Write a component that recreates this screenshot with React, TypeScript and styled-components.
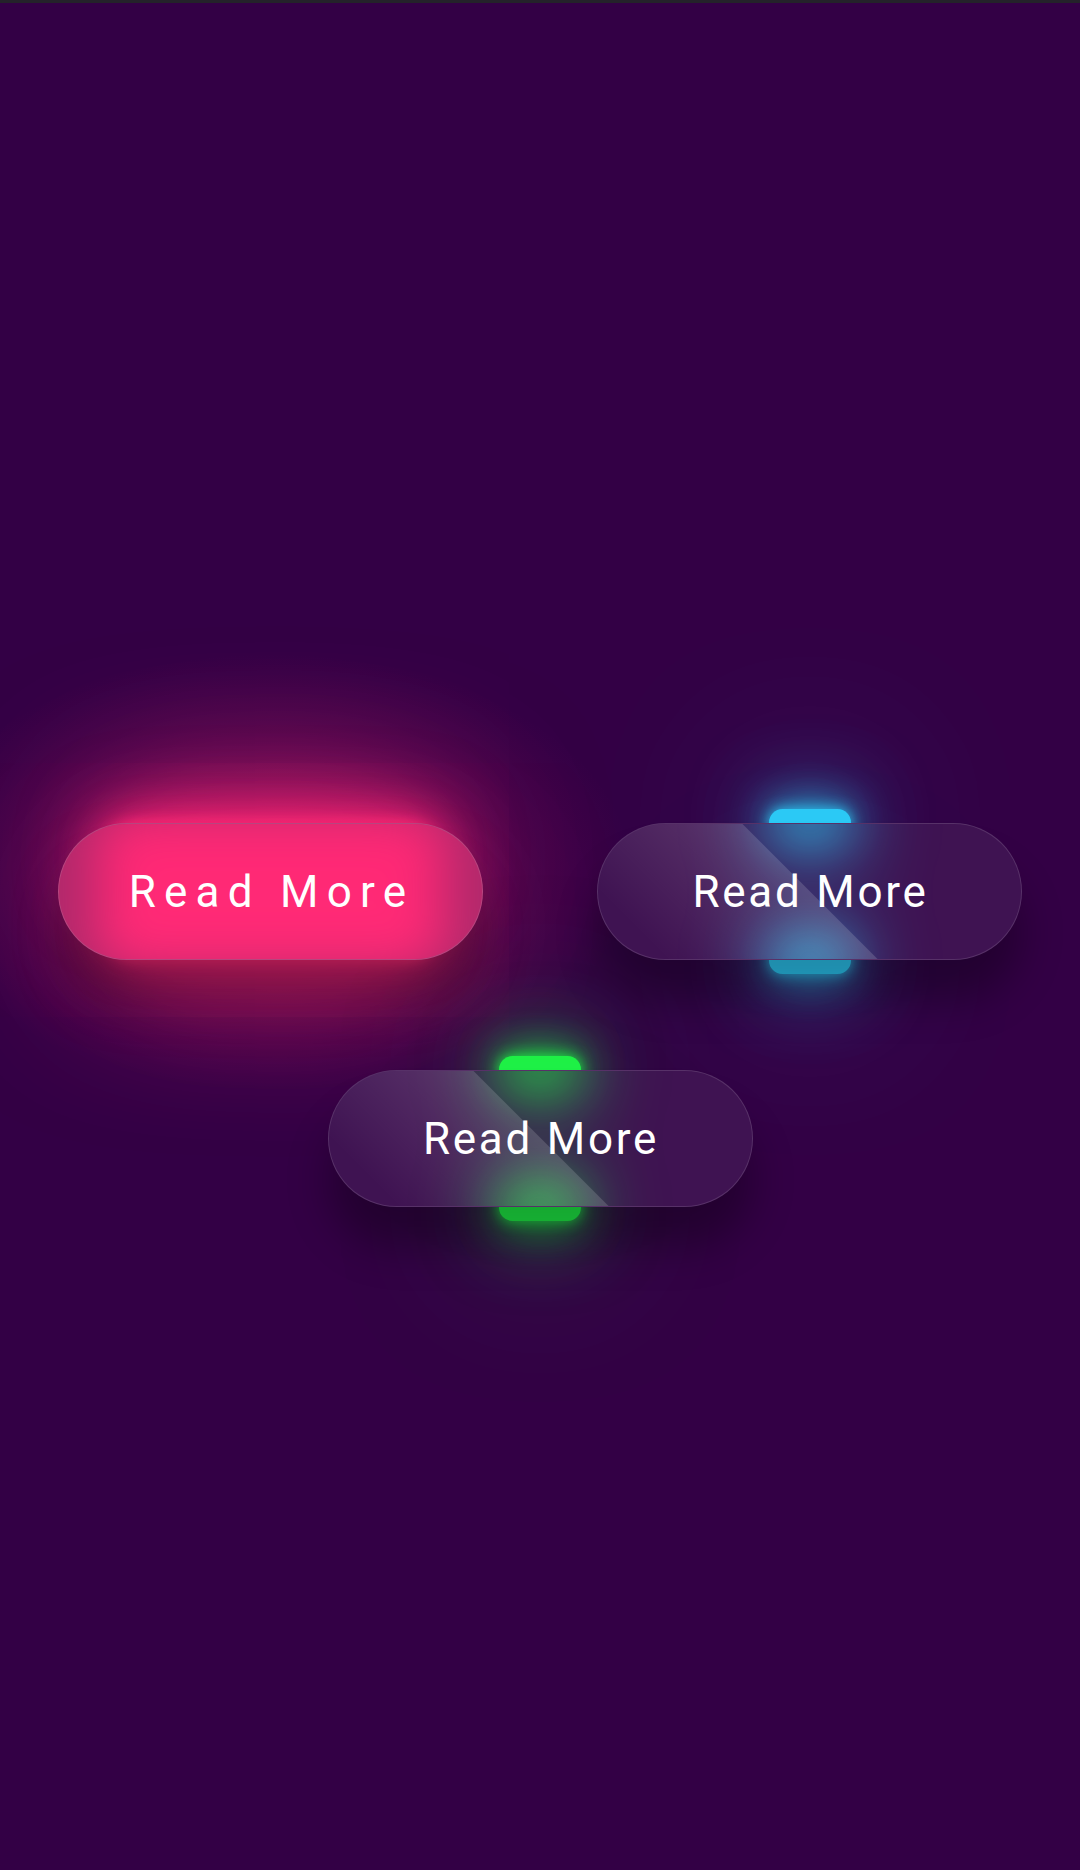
import React from "react";
import styled, { createGlobalStyle, css } from "styled-components";

const GlobalStyle = createGlobalStyle`
  html, body {
    margin: 0;
    padding: 0;
    background: #330045;
    font-family: Roboto, "Noto Sans", "Liberation Sans", sans-serif;
  }
  * { box-sizing: border-box; }
`;

const TopBar = styled.div`
  height: 3px;
  background: #24222a;
`;

const Stage = styled.main`
  display: flex;
  flex-wrap: wrap;
  justify-content: center;
  align-content: flex-start;
  width: 1080px;
  min-height: 1867px;
  padding-top: 765px;
  overflow: hidden;
  background: #330045;
`;

const barShape = css<{ $c: string; $on?: boolean }>`
  content: "";
  position: absolute;
  left: 50%;
  transform: translateX(-50%);
  width: ${(p) => (p.$on ? "80%" : "82px")};
  height: ${(p) => (p.$on ? "50%" : "27px")};
  border-radius: ${(p) => (p.$on ? "82px" : "14px")};
  background: ${(p) => p.$c};
`;

const Btn = styled.div<{ $c: string; $on?: boolean }>`
  position: relative;
  width: 425px;
  height: 137px;
  margin: 55px 57px;

  &::before,
  &::after {
    ${barShape};
    box-shadow: 0 0 14px ${(p) => p.$c}, 0 0 41px ${(p) => p.$c},
      0 0 82px ${(p) => p.$c}, 0 0 165px ${(p) => p.$c};
  }
  &::before {
    top: ${(p) => (p.$on ? "0" : "-14px")};
  }
  &::after {
    bottom: ${(p) => (p.$on ? "0" : "-14px")};
  }
`;

const Halo = styled.span<{ $rgb: string }>`
  position: absolute;
  left: -150px;
  right: -150px;
  top: -170px;
  bottom: -130px;
  pointer-events: none;
  background: radial-gradient(
    ellipse 50% 50% at 50% 50%,
    rgba(${(p) => p.$rgb}, 0.26) 0%,
    rgba(${(p) => p.$rgb}, 0.12) 55%,
    rgba(${(p) => p.$rgb}, 0) 100%
  );
`;

const Glass = styled.a<{ $on?: boolean }>`
  position: absolute;
  inset: 0;
  z-index: 1;
  display: flex;
  justify-content: center;
  align-items: center;
  border-radius: 999px;
  background: ${(p) => (p.$on ? "#ae2a6c" : "#3f1352")};
  border: 1.5px solid rgba(255, 255, 255, 0.13);
  box-shadow: 0 41px 41px rgba(0, 0, 0, 0.3);
  overflow: hidden;
  color: #fff;
  font-family: Roboto, "Noto Sans", "Liberation Sans", sans-serif;
  font-size: 44px;
  font-weight: 400;
  letter-spacing: ${(p) => (p.$on ? "8.25px" : "2.75px")};
  text-decoration: none;
  cursor: pointer;

  &::before {
    content: "";
    position: absolute;
    z-index: 1;
    top: 0;
    left: 0;
    width: 50%;
    height: 100%;
    background: linear-gradient(to left, rgba(255, 255, 255, 0.15), transparent);
    transform: skewX(45deg) translateX(${(p) => (p.$on ? "600px" : "0")});
  }
`;

const Haze = styled.span<{ $c: string; $on?: boolean }>`
  position: absolute;
  inset: 0;
  z-index: 0;
  filter: blur(${(p) => (p.$on ? "24px" : "26px")});
  opacity: ${(p) => (p.$on ? 1 : 0.95)};

  &::before,
  &::after {
    ${barShape};
    box-shadow: 0 0 ${(p) => (p.$on ? "30px" : "45px")} ${(p) => p.$c},
      0 0 ${(p) => (p.$on ? "50px" : "90px")} ${(p) => p.$c};
  }
  &::before {
    top: ${(p) => (p.$on ? "0" : "-14px")};
  }
  &::after {
    bottom: ${(p) => (p.$on ? "0" : "-14px")};
  }
`;

const Label = styled.span`
  position: relative;
  z-index: 2;
  padding-left: 2px;
`;

type Item = { color: string; rgb: string; active?: boolean };

const items: Item[] = [
  { color: "#ff2a76", rgb: "255, 42, 118", active: true },
  { color: "#2cc9f5", rgb: "44, 201, 245" },
  { color: "#1ff046", rgb: "31, 240, 70" },
];

export default function App() {
  return (
    <>
      <GlobalStyle />
      <TopBar />
      <Stage>
        {items.map((it, i) => (
          <Btn key={i} $c={it.color} $on={it.active}>
            {it.active && <Halo $rgb={it.rgb} />}
            <Glass $on={it.active} href="#">
              <Haze $c={it.color} $on={it.active} />
              <Label>Read More</Label>
            </Glass>
          </Btn>
        ))}
      </Stage>
    </>
  );
}
